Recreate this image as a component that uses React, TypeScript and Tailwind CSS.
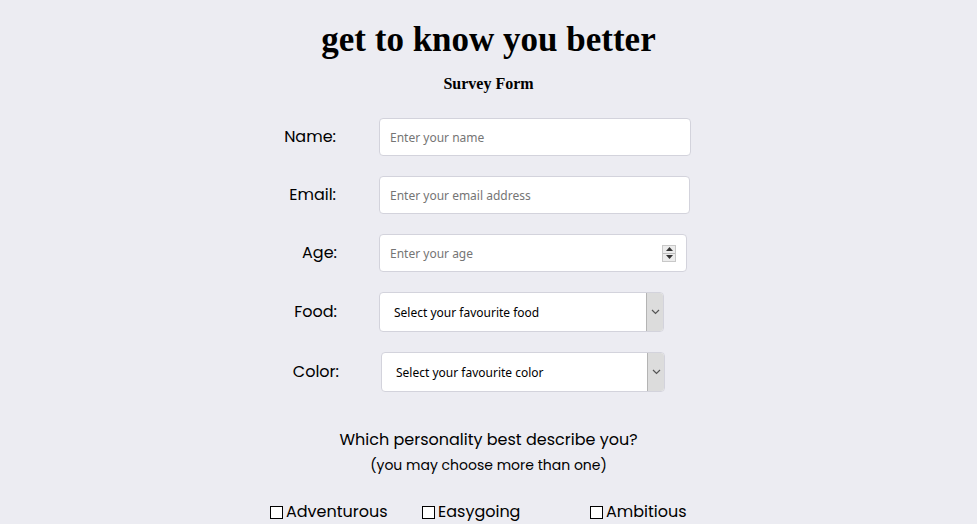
import type { ReactNode } from "react";

const sans = "font-['Poppins','Noto_Sans',sans-serif]";
const field = "font-['Noto_Sans',sans-serif]";

function Row({
  label,
  labelEnd,
  inputStart,
  children,
}: {
  label: string;
  labelEnd: number;
  inputStart: number;
  children: ReactNode;
}) {
  // label right edge and field left edge are measured from the page's left
  return (
    <div className="flex items-center">
      <div className={`${sans} text-[16px] text-black text-right`} style={{ width: labelEnd }}>
        {label}
      </div>
      <div style={{ marginLeft: inputStart - labelEnd }}>{children}</div>
    </div>
  );
}

function TextBox({ placeholder, w, spin }: { placeholder: string; w: number; spin?: boolean }) {
  return (
    <div
      className="flex h-[38px] items-center rounded-[4px] border border-[#d3d3dc] bg-white pl-[10px] pr-[10px]"
      style={{ width: w }}
    >
      <span className={`${field} flex-1 pt-[1px] text-[12px] text-[#757575]`}>{placeholder}</span>
      {spin && (
        <div className="flex h-[17px] w-[14px] flex-col border border-[#c8c8c8] bg-[#ececec]">
          <div className="flex flex-1 items-center justify-center border-b border-[#bdbdbd]">
            <svg width="7" height="4" viewBox="0 0 7 4">
              <path d="M0 4 L3.5 0 L7 4 Z" fill="#333" />
            </svg>
          </div>
          <div className="flex flex-1 items-center justify-center">
            <svg width="7" height="4" viewBox="0 0 7 4">
              <path d="M0 0 L3.5 4 L7 0 Z" fill="#333" />
            </svg>
          </div>
        </div>
      )}
    </div>
  );
}

function SelectBox({ text, w }: { text: string; w: number }) {
  return (
    <div
      className="flex h-[40px] items-stretch rounded-[4px] border border-[#d3d3dc] bg-white"
      style={{ width: w }}
    >
      <span className={`${field} flex flex-1 items-center pl-[14px] pt-[1px] text-[12px] text-black`}>{text}</span>
      <div className="flex w-[17px] items-center justify-center rounded-r-[3px] border-l border-[#b4b4b4] bg-[#dcdcdc]">
        <svg width="9" height="6" viewBox="0 0 9 6">
          <path d="M1 1 L4.5 4.5 L8 1" fill="none" stroke="#555" strokeWidth="1.2" />
        </svg>
      </div>
    </div>
  );
}

function Check({ label }: { label: string }) {
  return (
    <div className="flex items-center">
      <div className="h-[13px] w-[13px] border border-black bg-white" />
      <span className={`${sans} ml-[3px] text-[16px] text-black`}>{label}</span>
    </div>
  );
}

export default function App() {
  return (
    <div className="h-[524px] w-full overflow-hidden bg-[#ececf2]">
      <h1 className="pt-[18px] text-center font-['Liberation_Serif',serif] text-[35px] font-bold leading-[44px] text-black">
        get to know you better
      </h1>
      <h2 className="mt-[12px] text-center font-['Liberation_Serif',serif] text-[16px] font-bold leading-[20px] text-black">
        Survey Form
      </h2>

      <div className="mt-[24px] flex flex-col gap-[20px]">
        <Row label="Name:" labelEnd={336} inputStart={379}>
          <TextBox placeholder="Enter your name" w={312} />
        </Row>
        <Row label="Email:" labelEnd={336} inputStart={379}>
          <TextBox placeholder="Enter your email address" w={311} />
        </Row>
        <Row label="Age:" labelEnd={337} inputStart={379}>
          <TextBox placeholder="Enter your age" w={308} spin />
        </Row>
        <Row label="Food:" labelEnd={337} inputStart={379}>
          <SelectBox text="Select your favourite food" w={285} />
        </Row>
        <Row label="Color:" labelEnd={339} inputStart={381}>
          <SelectBox text="Select your favourite color" w={284} />
        </Row>
      </div>

      <p className={`${sans} mt-[36px] text-center text-[16px] leading-[24px] text-black`}>
        Which personality best describe you?
      </p>
      <p className={`${sans} mt-[2px] text-center text-[14px] leading-[22px] text-black`}>
        (you may choose more than one)
      </p>

      <div className="mt-[24px] flex">
        <div className="ml-[270px] w-[152px]">
          <Check label="Adventurous" />
        </div>
        <div className="w-[168px]">
          <Check label="Easygoing" />
        </div>
        <div>
          <Check label="Ambitious" />
        </div>
      </div>
    </div>
  );
}
